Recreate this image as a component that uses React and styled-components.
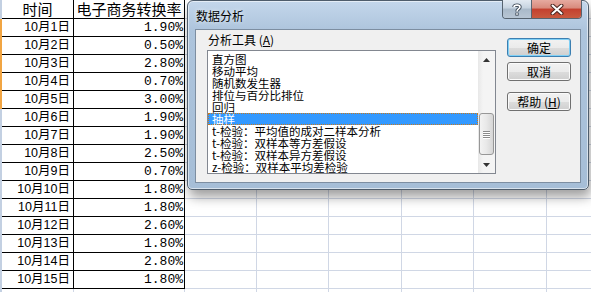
import React from "react";
import styled, { createGlobalStyle } from "styled-components";

const GlobalStyle = createGlobalStyle`
  html, body {
    margin: 0;
    padding: 0;
    background: #ffffff;
  }
  body {
    width: 591px;
    height: 292px;
    overflow: hidden;
    font-family: "Noto Sans CJK SC", sans-serif;
  }
`

const Page = styled.div`
  position: relative;
  width: 591px;
  height: 292px;
  overflow: hidden;
  background: #fff;
`

const Sheet = styled.div`
  display: grid;
  grid-template-columns: 2px 72px 111px 72px 72px 73px 72px 73px 72px;
  grid-template-rows: 19px repeat(16, 18px);
`

const Edge = styled.div`
  background: ${p => (p.$selected ? "#f1a543" : "#c3d0e2")};
`

const Cell = styled.div`
  box-sizing: border-box;
  border-right: 1px solid ${p => (p.$dark ? "#000" : "#d0d7e5")};
  border-bottom: 1px solid ${p => (p.$dark ? "#000" : "#d0d7e5")};
  display: flex;
  align-items: center;
  justify-content: ${p => p.$align || "flex-end"};
  padding-right: ${p => p.$pad || 0}px;
  color: #000;
  white-space: nowrap;
`

const HeadText = styled.span`
  font-family: "Noto Sans CJK SC", sans-serif;
  font-size: 15px;
  line-height: 18px;
`

const DateText = styled.span`
  font-family: "Liberation Sans", "Noto Sans CJK SC", sans-serif;
  font-size: 12.5px;
  line-height: 17px;
`

const PctText = styled.span`
  font-family: "Liberation Mono", monospace;
  font-size: 13px;
  line-height: 17px;
`

/* dialog window */

const Dialog = styled.div`
  position: absolute;
  left: 187px;
  top: 0;
  width: 402px;
  height: 190px;
  box-sizing: border-box;
  border: 1px solid #4f5d6c;
  border-radius: 6px 6px 5px 5px;
  background: linear-gradient(180deg, #c4d7eb 0%, #adc4dc 16%, #a6bed7 100%);
  box-shadow: 2px 7px 12px rgba(0, 0, 0, 0.38), inset 0 0 0 1px rgba(255, 255, 255, 0.55);
  display: flex;
  flex-direction: column;
  padding: 0 7px 6px 7px;
`

const TitleBar = styled.div`
  height: 28px;
  display: flex;
  align-items: flex-start;
  justify-content: space-between;
`

const Title = styled.div`
  margin-top: 7px;
  padding-left: 1px;
  font-size: 12px;
  line-height: 16px;
  color: #000;
  text-shadow: 0 0 4px rgba(255, 255, 255, 0.9);
`

const Controls = styled.div`
  display: flex;
  margin-top: -1px;
  margin-right: -1px;
  border: 1px solid #56636f;
  border-top: none;
  border-radius: 0 0 4px 4px;
  overflow: hidden;
`

const CtrlBtn = styled.div`
  width: ${p => p.$w}px;
  height: 18px;
  display: flex;
  align-items: center;
  justify-content: center;
  background: ${p =>
    p.$close
      ? "linear-gradient(180deg, #e6aaa0 0%, #d88a7c 45%, #c4402f 50%, #c85a3f 100%)"
      : "linear-gradient(180deg, #e2eaf2 0%, #c6d3e0 45%, #a9b9c9 50%, #b8c6d4 100%)"};
  border-left: ${p => (p.$close ? "1px solid #5a6470" : "none")};
`

const Client = styled.div`
  flex: 1;
  box-sizing: border-box;
  border: 1px solid #7d8ea1;
  background: #f0f0f0;
  display: flex;
  padding: 0 10px 0 11px;
  gap: 11px;
`

const ToolColumn = styled.div`
  display: flex;
  flex-direction: column;
`

const Label = styled.div`
  font-size: 12px;
  line-height: 14px;
  margin-top: 3px;
  margin-bottom: 3px;
  padding-left: 1px;
  color: #000;

  & u {
    text-decoration: underline;
    text-underline-offset: 1px;
  }
`

const ListBox = styled.div`
  width: 289px;
  height: 124px;
  box-sizing: border-box;
  border: 1px solid #828790;
  background: #fff;
  display: flex;
`

const Items = styled.div`
  flex: 1;
  padding-top: 2px;
  display: flex;
  flex-direction: column;
`

const Item = styled.div`
  height: 12px;
  line-height: 12px;
  font-size: 11.5px;
  padding-left: 4px;
  white-space: nowrap;
  color: ${p => (p.$selected ? "#fff" : "#000")};
  background: ${p => (p.$selected ? "#3399ff" : "transparent")};
  outline: ${p => (p.$selected ? "1px dotted #c87a1e" : "none")};
  outline-offset: -1px;
`

const ScrollBar = styled.div`
  width: 17px;
  background: linear-gradient(90deg, #e8e8e8 0%, #f4f4f4 30%, #f4f4f4 100%);
  display: flex;
  flex-direction: column;
  align-items: center;
`

const Arrow = styled.div`
  height: 17px;
  width: 17px;
  display: flex;
  align-items: center;
  justify-content: center;
`

const Spacer = styled.div`
  height: ${p => p.$h}px;
  flex: ${p => (p.$grow ? 1 : "none")};
`

const Thumb = styled.div`
  width: 15px;
  height: 42px;
  box-sizing: border-box;
  border: 1px solid #979797;
  border-radius: 3px;
  background: linear-gradient(90deg, #f3f3f3 0%, #e8e8e8 50%, #d6d6d6 100%);
  display: flex;
  flex-direction: column;
  align-items: center;
  justify-content: center;
  gap: 1px;
`

const Grip = styled.div`
  width: 7px;
  height: 1px;
  background: #8a8a8a;
  box-shadow: 0 1px 0 #fff;
`

const ButtonColumn = styled.div`
  display: flex;
  flex-direction: column;
  padding-top: 8px;
`

const Button = styled.div`
  width: 64px;
  height: 19px;
  box-sizing: border-box;
  margin-top: ${p => p.$gap || 0}px;
  border: 1px solid ${p => (p.$default ? "#3c7fb1" : "#707070")};
  border-radius: 3px;
  background: linear-gradient(180deg, #f2f2f2 0%, #ebebeb 50%, #dddddd 51%, #cfcfcf 100%);
  box-shadow: ${p =>
    p.$default ? "inset 0 0 0 1px #7fd0f6" : "inset 0 0 0 1px #fbfbfb"};
  display: flex;
  align-items: center;
  justify-content: center;
  font-size: 12px;
  line-height: 14px;
  color: #000;

  & u {
    text-decoration: underline;
    text-underline-offset: 1px;
  }
`

const dates = [
  ["10月1日", "1.90%"],
  ["10月2日", "0.50%"],
  ["10月3日", "2.80%"],
  ["10月4日", "0.70%"],
  ["10月5日", "3.00%"],
  ["10月6日", "1.90%"],
  ["10月7日", "1.90%"],
  ["10月8日", "2.50%"],
  ["10月9日", "0.70%"],
  ["10月10日", "1.80%"],
  ["10月11日", "1.80%"],
  ["10月12日", "2.60%"],
  ["10月13日", "1.80%"],
  ["10月14日", "2.80%"],
  ["10月15日", "1.80%"],
]

const tools = [
  "直方图",
  "移动平均",
  "随机数发生器",
  "排位与百分比排位",
  "回归",
  "抽样",
  "t-检验：平均值的成对二样本分析",
  "t-检验：双样本等方差假设",
  "t-检验：双样本异方差假设",
  "z-检验：双样本平均差检验",
]

const blankCols = 6

const BlankCells = ({ row }) =>
  Array.from({ length: blankCols }, (_, i) => <Cell key={`b${row}-${i}`} />)

const HelpGlyph = () => (
  <svg width="10" height="13" viewBox="0 0 10 13">
    <path d="M2 4 C2 1.5 8 1.5 8 4 C8 6 5 6 5 8.5" fill="none" stroke="#3a4654" strokeWidth="3.4" />
    <path d="M2 4 C2 1.5 8 1.5 8 4 C8 6 5 6 5 8.5" fill="none" stroke="#fff" strokeWidth="1.6" />
    <rect x="3.4" y="9.6" width="3.2" height="3" fill="#3a4654" />
    <rect x="4.2" y="10.2" width="1.6" height="1.6" fill="#fff" />
  </svg>
)

const CloseGlyph = () => (
  <svg width="14" height="11" viewBox="0 0 14 11">
    <path d="M2.5 1.5 L11.5 9.5 M11.5 1.5 L2.5 9.5" stroke="#4a2620" strokeWidth="4" strokeLinecap="round" />
    <path d="M2.5 1.5 L11.5 9.5 M11.5 1.5 L2.5 9.5" stroke="#fff" strokeWidth="2" strokeLinecap="round" />
  </svg>
)

const Tri = ({ down }) => (
  <svg width="7" height="4" viewBox="0 0 7 4">
    <path d={down ? "M0 0 L7 0 L3.5 4 Z" : "M0 4 L7 4 L3.5 0 Z"} fill="#333" />
  </svg>
)

const App = () => (
  <Page>
    <GlobalStyle />
    <Sheet>
      <Edge />
      <Cell $dark $align="center">
        <HeadText>时间</HeadText>
      </Cell>
      <Cell $dark $align="center">
        <HeadText>电子商务转换率</HeadText>
      </Cell>
      <BlankCells row="h" />

      {dates.map(([d, v], i) => (
        <React.Fragment key={d}>
          <Edge $selected={i < 5} />
          <Cell $dark $pad={3}>
            <DateText>{d}</DateText>
          </Cell>
          <Cell $dark $pad={1}>
            <PctText>{v}</PctText>
          </Cell>
          <BlankCells row={i} />
        </React.Fragment>
      ))}

      <Edge />
      <Cell />
      <Cell />
      <BlankCells row="end" />
    </Sheet>

    <Dialog>
      <TitleBar>
        <Title>数据分析</Title>
        <Controls>
          <CtrlBtn $w={28}>
            <HelpGlyph />
          </CtrlBtn>
          <CtrlBtn $w={49} $close>
            <CloseGlyph />
          </CtrlBtn>
        </Controls>
      </TitleBar>
      <Client>
        <ToolColumn>
          <Label>
            分析工具 (<u>A</u>)
          </Label>
          <ListBox>
            <Items>
              {tools.map(t => (
                <Item key={t} $selected={t === "抽样"}>
                  {t}
                </Item>
              ))}
            </Items>
            <ScrollBar>
              <Arrow>
                <Tri />
              </Arrow>
              <Spacer $h={45} />
              <Thumb>
                <Grip />
                <Grip />
                <Grip />
                <Grip />
              </Thumb>
              <Spacer $grow />
              <Arrow>
                <Tri down />
              </Arrow>
            </ScrollBar>
          </ListBox>
        </ToolColumn>
        <ButtonColumn>
          <Button $default>确定</Button>
          <Button $gap={5}>取消</Button>
          <Button $gap={11}>
            帮助 (<u>H</u>)
          </Button>
        </ButtonColumn>
      </Client>
    </Dialog>
  </Page>
)

export default App;
